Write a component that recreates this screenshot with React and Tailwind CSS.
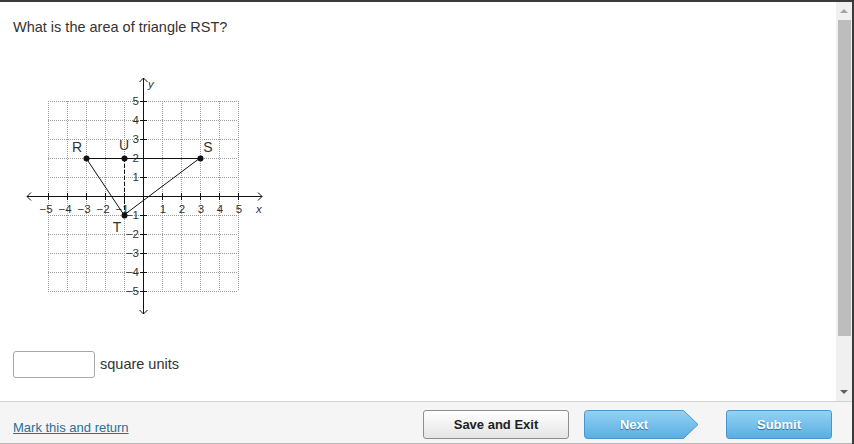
import React from "react";

const U = 19;
const OX = 143;
const OY = 196;
const px = (x) => OX + x * U;
const py = (y) => OY - y * U;

function Graph() {
  const ks = [-5, -4, -3, -2, -1, 0, 1, 2, 3, 4, 5];
  const R = [px(-3), py(2)];
  const S = [px(3), py(2)];
  const Up = [px(-1), py(2)];
  const T = [px(-1), py(-1)];
  return (
    <svg
      width="250"
      height="250"
      viewBox="20 72 250 250"
      className="block"
      style={{ fontFamily: '"Liberation Sans", Arial, sans-serif' }}
    >
      {ks.map((k) => (
        <line
          key={"v" + k}
          x1={px(k) + 0.5}
          y1={py(5)}
          x2={px(k) + 0.5}
          y2={py(-5)}
          stroke="#9a9a9a"
          strokeWidth="1"
          strokeDasharray="1 1"
        />
      ))}
      {ks.map((k) => (
        <line
          key={"h" + k}
          x1={px(-5)}
          y1={py(k) + 0.5}
          x2={px(5)}
          y2={py(k) + 0.5}
          stroke="#9a9a9a"
          strokeWidth="1"
          strokeDasharray="1 1"
        />
      ))}
      <line x1="27" y1={OY + 0.5} x2="262" y2={OY + 0.5} stroke="#111" strokeWidth="1" />
      <line x1={OX + 0.5} y1="78" x2={OX + 0.5} y2="314" stroke="#111" strokeWidth="1" />
      <polyline points={`31,${OY - 3.5} 27,${OY + 0.5} 31,${OY + 4.5}`} fill="none" stroke="#111" />
      <polyline points={`258,${OY - 3.5} 262,${OY + 0.5} 258,${OY + 4.5}`} fill="none" stroke="#111" />
      <polyline points={`${OX - 3.5},82 ${OX + 0.5},78 ${OX + 4.5},82`} fill="none" stroke="#111" />
      <polyline points={`${OX - 3.5},310 ${OX + 0.5},314 ${OX + 4.5},310`} fill="none" stroke="#111" />
      {ks
        .filter((k) => k !== 0)
        .map((k) => (
          <g key={"t" + k}>
            <line x1={px(k) + 0.5} y1={OY - 3} x2={px(k) + 0.5} y2={OY + 4} stroke="#111" />
            <line x1={OX - 3} y1={py(k) + 0.5} x2={OX + 4} y2={py(k) + 0.5} stroke="#111" />
          </g>
        ))}
      {ks
        .filter((k) => k !== 0)
        .map((k) => (
          <text
            key={"xl" + k}
            x={px(k) + (k < 0 ? -2 : 1)}
            y={OY + 17}
            fontSize="11.5"
            fill="#333"
            textAnchor="middle"
          >
            {k < 0 ? "\u2212" + -k : k}
          </text>
        ))}
      {ks
        .filter((k) => k !== 0)
        .map((k) => (
          <text
            key={"yl" + k}
            x={OX - 4}
            y={py(k) + 4}
            fontSize="11.5"
            fill="#333"
            textAnchor="end"
          >
            {k < 0 ? "\u2212" + -k : k}
          </text>
        ))}
      <text x="256" y={OY + 17} fontSize="11.5" fontStyle="italic" fill="#333">x</text>
      <text x={OX + 5} y="88" fontSize="11.5" fontStyle="italic" fill="#333">y</text>
      <line x1={R[0]} y1={R[1] + 0.5} x2={S[0]} y2={S[1] + 0.5} stroke="#111" />
      <line x1={R[0]} y1={R[1]} x2={T[0]} y2={T[1]} stroke="#111" />
      <line x1={T[0]} y1={T[1]} x2={S[0]} y2={S[1]} stroke="#111" />
      <line
        x1={Up[0] + 0.5}
        y1={Up[1]}
        x2={T[0] + 0.5}
        y2={T[1]}
        stroke="#111"
        strokeDasharray="4 2"
      />
      {[R, S, Up, T].map((p, i) => (
        <circle key={i} cx={p[0] + 0.5} cy={p[1] + 0.5} r="3" fill="#111" />
      ))}
      <text x="77" y="152" fontSize="14" fill="#333" textAnchor="middle">R</text>
      <text x="124" y="150" fontSize="14" fill="#333" textAnchor="middle">U</text>
      <text x="208" y="152" fontSize="14" fill="#333" textAnchor="middle">S</text>
      <text x="117" y="232" fontSize="14" fill="#333" textAnchor="middle">T</text>
    </svg>
  );
}

function NextButton() {
  return (
    <div className="relative w-[115px] h-[29px] flex items-center">
      <svg width="115" height="29" className="absolute inset-0" viewBox="0 0 115 29">
        <defs>
          <linearGradient id="ng" x1="0" y1="0" x2="0" y2="1">
            <stop offset="0" stopColor="#93d2f4" />
            <stop offset="1" stopColor="#5aaee2" />
          </linearGradient>
        </defs>
        <path
          d="M3.5 0.5 H99.5 L114 14.5 L99.5 28.5 H3.5 Q0.5 28.5 0.5 25.5 V3.5 Q0.5 0.5 3.5 0.5 Z"
          fill="url(#ng)"
          stroke="#4a96cc"
        />
      </svg>
      <span className="relative w-[100px] text-center text-white font-bold text-[13px] [text-shadow:0_1px_1px_#2a6a99]">
        Next
      </span>
    </div>
  );
}

export default function App() {
  return (
    <div
      className="w-[854px] h-[444px] overflow-hidden bg-white border-t-2 border-r-2 border-[#3a3a3a] flex flex-col"
      style={{ fontFamily: '"Liberation Sans", Arial, sans-serif' }}
    >
      <div className="h-[399px] flex">
        <div className="flex-1 pl-[13px] pt-[15px]">
          <div className="text-[14.5px] leading-[20px] text-[#333]">What is the area of triangle RST?</div>
          <div className="mt-[35px] ml-[7px]">
            <Graph />
          </div>
          <div className="mt-[29px] flex items-center">
            <div className="w-[82px] h-[27px] border border-[#a8a8a8] rounded-[3px] bg-white" />
            <span className="ml-[5px] text-[14.5px] text-[#333]">square units</span>
          </div>
        </div>
        <div className="w-[16px] bg-[#f0f0f0] flex flex-col items-center">
          <div className="h-[18px] flex items-center justify-center">
            <div className="w-0 h-0 border-l-[4px] border-r-[4px] border-b-[4px] border-l-transparent border-r-transparent border-b-[#a3a3a3]" />
          </div>
          <div className="w-[13px] h-[316px] bg-[#bdbdbd]" />
          <div className="flex-1" />
          <div className="h-[18px] flex items-center justify-center">
            <div className="w-0 h-0 border-l-[4px] border-r-[4px] border-t-[4px] border-l-transparent border-r-transparent border-t-[#606060]" />
          </div>
        </div>
      </div>
      <div className="h-[43px] border-t border-b border-t-[#d2d2d2] border-b-[#b8b8b8] bg-[#f5f5f5] flex items-start pt-[8px] pl-[13px]">
        <a className="mt-[10px] text-[13px] leading-[16px] text-[#2a7098] underline">Mark this and return</a>
        <div className="ml-auto mr-[20px] flex items-start">
          <div className="w-[146px] h-[29px] rounded-[3px] border border-[#8e8e8e] bg-gradient-to-b from-[#ffffff] to-[#e4e4e4] flex items-center justify-center text-[13px] font-bold text-[#222]">
            Save and Exit
          </div>
          <div className="ml-[15px]">
            <NextButton />
          </div>
          <div className="ml-[27px] w-[106px] h-[29px] rounded-[3px] border border-[#4a96cc] bg-gradient-to-b from-[#93d2f4] to-[#5aaee2] flex items-center justify-center text-[13px] font-bold text-white [text-shadow:0_1px_1px_#2a6a99]">
            Submit
          </div>
        </div>
      </div>
    </div>
  );
}
